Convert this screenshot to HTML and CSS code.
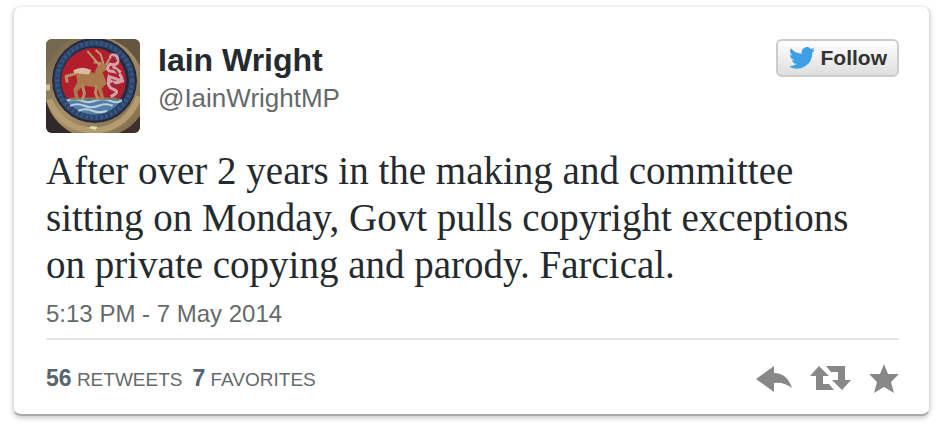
FILE: index.html
```html
<!DOCTYPE html>
<html lang="en">
<head>
<meta charset="utf-8">
<title>Iain Wright on Twitter</title>
<link rel="stylesheet" href="styles.css">
</head>
<body>
<article class="tweet">
  <header class="header">
    <a class="author" href="#">
      <svg class="avatar" viewBox="0 0 93 93" aria-hidden="true">
        <defs>
          <linearGradient id="stone" x1="0" y1="0" x2="1" y2="1">
            <stop offset="0" stop-color="#6f6148"/>
            <stop offset=".5" stop-color="#a58e67"/>
            <stop offset="1" stop-color="#806c4c"/>
          </linearGradient>
        </defs>
        <rect width="93" height="93" fill="url(#stone)"/>
        <path d="M64 0H93V27Q84 8 64 0Z" fill="#64563f"/>
        <path d="M0 0H25Q9 8 0 29Z" fill="#756850"/>
        <path d="M0 61Q6 82 26 93H0Z" fill="#30292a"/>
        <path d="M93 76Q85 88 72 93H93Z" fill="#3a3029"/>
        <path d="M3 60Q15 89 48 91Q80 88 92 57" fill="none" stroke="#b39c70" stroke-width="6"/>
        <circle cx="48" cy="41" r="42" fill="#26283b"/>
        <circle cx="48" cy="41" r="37" fill="none" stroke="#2b456d" stroke-width="6"/>
        <circle cx="48" cy="41" r="37" fill="none" stroke="#3f5a80" stroke-width="4" stroke-dasharray="2 3"/>
        <circle cx="47" cy="41" r="33" fill="#24314e"/>
        <circle cx="47" cy="41" r="32" fill="#b21e2b"/>
        <path d="M19 59H76Q66 74 48 75Q29 74 19 59Z" fill="#527fa8"/>
        <path d="M21 61q7-3 14 0t14 0t14 0t12 0M24 66q7-3 14 0t14 0t14 0M32 71q7-3 14 0t14 0" fill="none" stroke="#bdd0da" stroke-width="2"/>
        <path d="M24 59H70" stroke="#7e7760" stroke-width="2"/>
        <path d="M30 35Q37 30 48 34L52 24L58 25L61 30L56 33L60 44L55 49L58 59H54L51 48L37 46L31 52L33 60H29L27 50L31 43Z" fill="#aa7a4c"/>
        <path d="M30 34L20 37L21 43M36 45L38 54L36 60M50 46L49 54L52 60" fill="none" stroke="#b58c5e" stroke-width="3"/>
        <path d="M27 31Q36 26 45 31L42 35L28 34Z" fill="#d9b8a4"/>
        <path d="M53 26L41 12M57 25L54 15L49 11M59 26L66 14M55 24L47 23" fill="none" stroke="#bc9871" stroke-width="2"/>
        <path d="M63 18q7-5 8 2t-8 5q-5 6 2 7t8 3q5 7-2 8t-9-4q-2 9 5 11t-3 7M66 27l8 6M62 37l15 5" fill="none" stroke="#d4a1a6" stroke-width="3"/>
        <path d="M65 17l5 5m-2 8l4 5m-7 8l5 5" stroke="#8e3144" stroke-width="2"/>
        <path d="M42 88l3-2 6 1-2 3z" fill="#d2dfaa"/>
        <path d="M0 45h4v6H0z" fill="#d0c099"/>
      </svg>
      <span class="names">
        <strong class="name">Iain Wright</strong>
        <span class="handle">@IainWrightMP</span>
      </span>
    </a>
    <button class="follow" type="button">
      <svg class="bird" viewBox="0 0 24 20" aria-hidden="true"><path d="M24 2.4a10 10 0 0 1-2.8.8A5 5 0 0 0 23.300.4a10 10 0 0 1-3.100 1.200A4.900 4.900 0 0 0 11.800 6.100 14 14 0 0 1 1.700 1a5 5 0 0 0 1.500 6.600A5 5 0 0 1 1 7a5 5 0 0 0 3.900 4.900 5 5 0 0 1-2.200.1 5 5 0 0 0 4.600 3.400A10 10 0 0 1 0 17.500a14 14 0 0 0 21.500-12.500A10 10 0 0 0 24 2.400z"/></svg>
      <span>Follow</span>
    </button>
  </header>
  <p class="text">After over 2 years in the making and committee sitting on Monday, Govt pulls copyright exceptions on private copying and parody. Farcical.</p>
  <a class="date" href="#"><time datetime="2014-05-07T17:13">5:13 PM - 7 May 2014</time></a>
  <footer class="footer">
    <div class="stats">
      <a class="stat" href="#"><strong>56</strong> <span>RETWEETS</span></a>
      <a class="stat" href="#"><strong>7</strong> <span>FAVORITES</span></a>
    </div>
    <div class="actions">
      <button class="action" type="button" aria-label="Reply"><svg width="36" height="28" viewBox="0 0 36 28"><path d="M0 14L18 1V8Q31 8 36 23Q28 17 18 18V27Z"/></svg></button>
      <button class="action" type="button" aria-label="Retweet"><svg width="41" height="28" viewBox="0 0 41 28"><path d="M0 11L9 1L19 11H13V19H19L24 25H6V11ZM16 1H35V15H41L32 25L22 15H28V7H21Z"/></svg></button>
      <button class="action" type="button" aria-label="Favorite"><svg width="30" height="30" viewBox="0 0 30 30"><path d="M15 0L19 10H30L22 18L25 29L15 23L5 29L8 18L0 10H11Z"/></svg></button>
    </div>
  </footer>
</article>
</body>
</html>
```

FILE: styles.css
```css
* {
  box-sizing: border-box;
}

body {
  margin: 0;
  padding: 6px 10px 12px 13px;
  background: #fff;
  color: #242a2e;
  font-family: "Liberation Sans", Arial, sans-serif;
}

a {
  color: inherit;
  text-decoration: none;
}

button {
  font-family: inherit;
  cursor: pointer;
}

.tweet {
  padding: 32px 30px 20px 32px;
  border: 1px solid #e4e4e4;
  border-color: #eee #ddd #aaa;
  border-width: 1px 1px 2px;
  border-radius: 8px;
  background: #fff;
  box-shadow: 0 2px 5px rgba(0, 0, 0, 0.22);
}

.header {
  display: flex;
  justify-content: space-between;
  align-items: flex-start;
}

.author {
  display: flex;
  gap: 18px;
}

.avatar {
  width: 94px;
  height: 94px;
  border-radius: 6px;
}

.names {
  display: flex;
  flex-direction: column;
}

.name {
  padding-top: 2px;
  font-size: 32px;
  line-height: 38px;
}

.handle {
  color: #66696b;
  font-size: 26px;
  line-height: 38px;
}

.follow {
  display: flex;
  align-items: center;
  gap: 6px;
  height: 38px;
  padding: 0 10px 0 11px;
  border: 2px solid #ccc;
  border-radius: 6px;
  background: linear-gradient(#fff, #dedede);
  color: #333;
  font-size: 21px;
  font-weight: bold;
}

.bird {
  width: 26px;
  height: 22px;
  fill: #3d9fe4;
}

.text {
  margin: 14px 0 0;
  padding-right: 24px;
  font-family: "Liberation Serif", "Times New Roman", serif;
  font-size: 39px;
  line-height: 47px;
}

.date {
  display: block;
  padding: 12px 0 10px;
  border-bottom: 2px solid #e3e5e6;
  color: #66696b;
  font-size: 24px;
  line-height: 28px;
}

.footer {
  display: flex;
  justify-content: space-between;
  align-items: center;
  padding-top: 24px;
}

.stats {
  display: flex;
  gap: 10px;
}

.stat {
  color: #66696b;
  font-size: 19px;
  line-height: 28px;
}

.stat strong {
  color: #55646e;
  font-size: 23px;
}

.actions {
  display: flex;
  align-items: center;
  gap: 18px;
}

.action {
  display: flex;
  padding: 0;
  border: 0;
  background: none;
}

.action svg {
  fill: #888;
}
```
